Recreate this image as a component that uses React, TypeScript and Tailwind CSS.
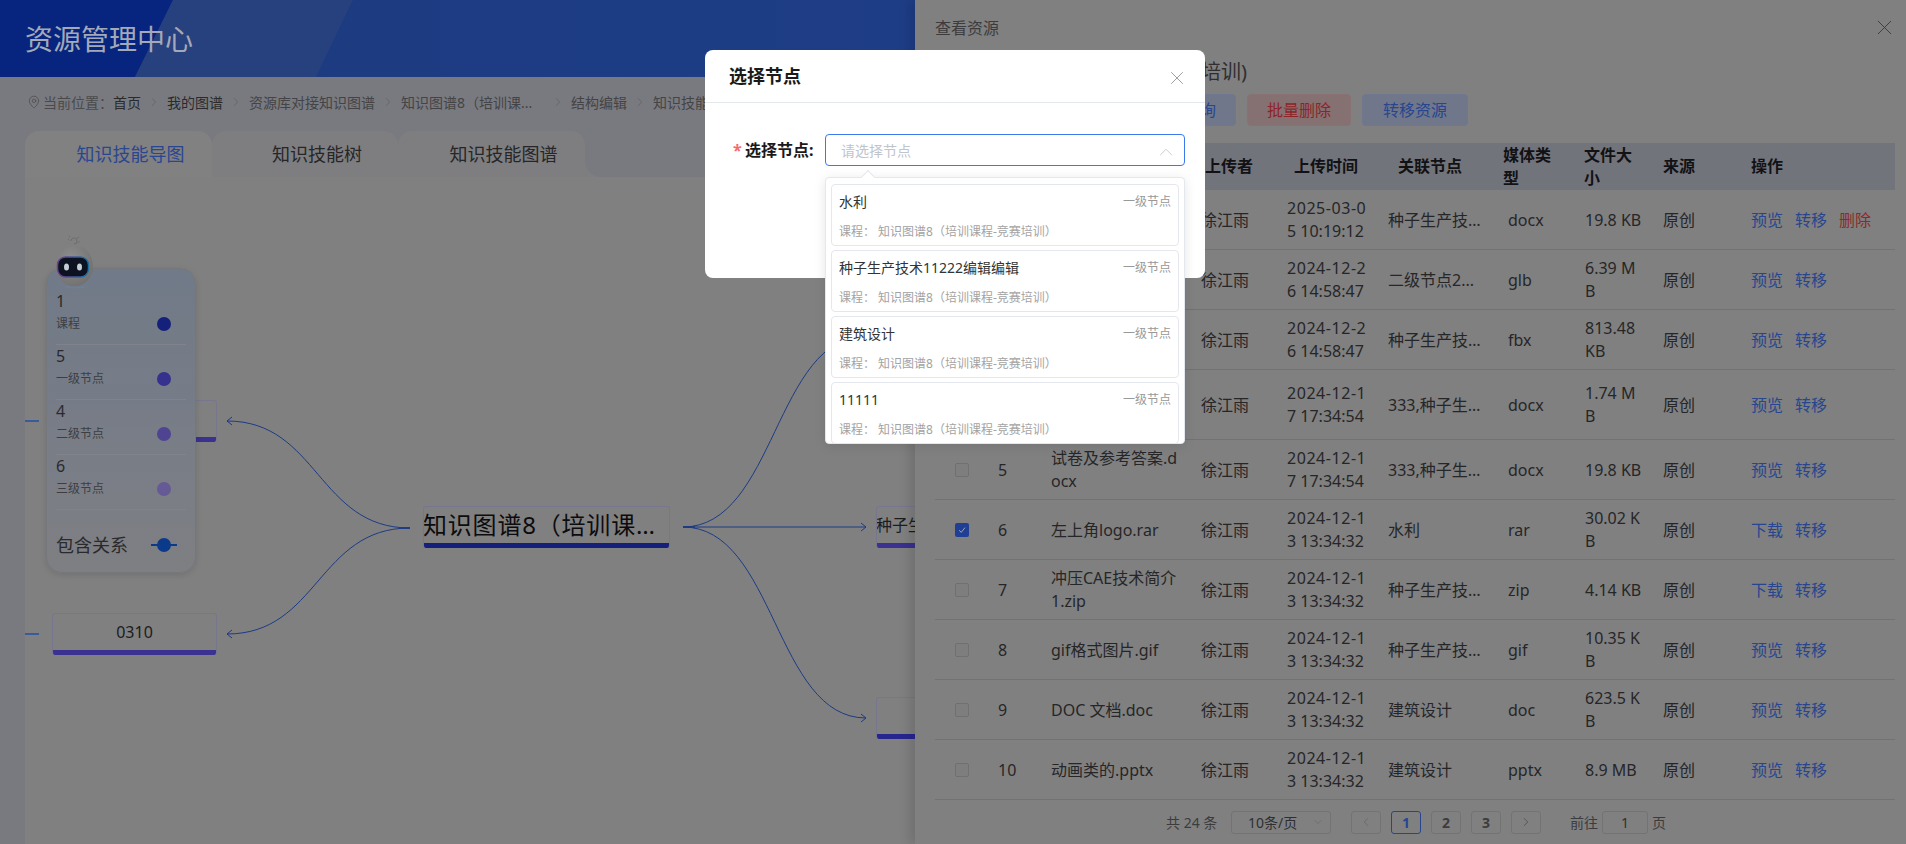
import { ChevronDown, ChevronLeft, ChevronRight, ChevronUp, MapPin, X } from 'lucide-react';

const crumbs = ['首页', '我的图谱', '资源库对接知识图谱', '知识图谱8（培训课...', '结构编辑', '知识技能导图'];

const legend = [
  { count: '1', label: '课程', dot: 'bg-[#15207a]' },
  { count: '5', label: '一级节点', dot: 'bg-[#36308e]' },
  { count: '4', label: '二级节点', dot: 'bg-[#4f4492]' },
  { count: '6', label: '三级节点', dot: 'bg-[#655a96]' }
];

const options = [
  { name: '水利' },
  { name: '种子生产技术11222编辑编辑' },
  { name: '建筑设计' },
  { name: '11111' }
];

const rows = [
  { no: 1, name: '', date: ['2025-03-0', '5 10:19:12'], node: '种子生产技术', type: 'docx', size: '19.8 KB', first: '预览', del: true, h: 'h-[59px]' },
  { no: 2, name: '', date: ['2024-12-2', '6 14:58:47'], node: '二级节点2...', type: 'glb', size: '6.39 M\nB', first: '预览', h: 'h-[60px]' },
  { no: 3, name: '', date: ['2024-12-2', '6 14:58:47'], node: '种子生产技术', type: 'fbx', size: '813.48\nKB', first: '预览', h: 'h-[60px]' },
  { no: 4, name: '', date: ['2024-12-1', '7 17:34:54'], node: '333,种子生产', type: 'docx', size: '1.74 M\nB', first: '预览', h: 'h-[70px]' },
  { no: 5, name: '试卷及参考答案.d\nocx', date: ['2024-12-1', '7 17:34:54'], node: '333,种子生产', type: 'docx', size: '19.8 KB', first: '预览', h: 'h-[60px]' },
  { no: 6, name: '左上角logo.rar', date: ['2024-12-1', '3 13:34:32'], node: '水利', type: 'rar', size: '30.02 K\nB', first: '下载', checked: true, h: 'h-[60px]' },
  { no: 7, name: '冲压CAE技术简介\n1.zip', date: ['2024-12-1', '3 13:34:32'], node: '种子生产技术', type: 'zip', size: '4.14 KB', first: '下载', h: 'h-[60px]' },
  { no: 8, name: 'gif格式图片.gif', date: ['2024-12-1', '3 13:34:32'], node: '种子生产技术', type: 'gif', size: '10.35 K\nB', first: '预览', h: 'h-[60px]' },
  { no: 9, name: 'DOC 文档.doc', date: ['2024-12-1', '3 13:34:32'], node: '建筑设计', type: 'doc', size: '623.5 K\nB', first: '预览', h: 'h-[60px]' },
  { no: 10, name: '动画类的.pptx', date: ['2024-12-1', '3 13:34:32'], node: '建筑设计', type: 'pptx', size: '8.9 MB', first: '预览', h: 'h-[60px]' }
];

const MapNode = ({ className, bar, children }: { className: string; bar: string; children?: React.ReactNode }) => (
  <div className={`absolute h-[42px] rounded-[3px] border border-[#77768f] border-b-0 bg-[#808080] overflow-hidden flex flex-col ${className}`}>
    <div className="flex-1 min-h-0 flex items-center">{children}</div>
    <div className={`h-[5px] shrink-0 ${bar}`} />
  </div>
);

const Robot = () => (
  <svg className="absolute left-[28px] top-[58px] z-20" width="44" height="54" viewBox="0 0 44 54">
    <defs>
      <radialGradient id="head" cx="0.4" cy="0.35" r="0.75">
        <stop offset="0" stopColor="#8f8f8f" />
        <stop offset="1" stopColor="#6e6e6e" />
      </radialGradient>
      <linearGradient id="rim" x1="0" x2="1">
        <stop offset="0" stopColor="#6f3f90" />
        <stop offset="1" stopColor="#1f6f9f" />
      </linearGradient>
    </defs>
    <path d="M18 6a3 3 0 1 1 3 3M24 3l2-1M25 7h2M15 4l1 1M16 1l1 1" fill="none" stroke="#707070" strokeWidth="1.2" />
    <ellipse cx="22" cy="52" rx="11" ry="1.5" fill="#6f7f95" />
    <ellipse cx="21.5" cy="31" rx="18.5" ry="20.5" fill="url(#head)" />
    <rect x="4.5" y="22" width="31" height="20" rx="8" fill="#0d1220" stroke="url(#rim)" strokeWidth="1.5" />
    <ellipse cx="13.5" cy="32" rx="2.5" ry="3.5" fill="#c4ccd6" />
    <ellipse cx="26.5" cy="32" rx="2.5" ry="3.5" fill="#c4ccd6" />
  </svg>
);

const Arrow = ({ x, y, dir }: { x: number; y: number; dir: 1 | -1 }) => (
  <path d={`M${x + dir * -5} ${y - 4}L${x} ${y}L${x + dir * -5} ${y + 4}`} fill="none" stroke="#1c3a85" strokeWidth="1" />
);

const LeftPage = () => (
  <div className="w-[915px] shrink-0 h-full flex flex-col bg-[#797a7f]">
    <header className="relative h-[77px] shrink-0 bg-[linear-gradient(90deg,#1c3a7e,#1d3d86)] overflow-hidden flex items-center pl-[25px]">
      <svg className="absolute left-0 top-0" width="360" height="77" viewBox="0 0 360 77">
        <polygon points="0,0 173,0 135,77 0,77" fill="#07257f" />
        <polygon points="173,0 353,0 316,77 135,77" fill="#27407e" />
      </svg>
      <h1 className="relative text-[28px] leading-none font-normal text-[#a3a9b8]">资源管理中心</h1>
    </header>
    <div className="h-[54px] shrink-0 pl-[27px] pb-[4px] flex items-center text-[14px] text-[#3a3a3c] whitespace-nowrap">
      <MapPin size={14} strokeWidth={1.25} className="mr-[2px] text-[#4a4a4c]" />
      <span className="text-[#4a4a4c]">当前位置：</span>
      {crumbs.map((item, i) => (
        <span key={item} className="flex items-center">
          <span className={`${i < 2 ? 'text-[#2a2a2c]' : 'text-[#444446]'} ${i === 3 ? 'w-[144px]' : ''}`}>{item}</span>
          {i < crumbs.length - 1 && <ChevronRight size={14} strokeWidth={1.25} className="mx-[6px] text-[#5f5f63]" />}
        </span>
      ))}
    </div>
    <div className="flex-1 min-h-0 ml-[25px] flex flex-col">
      <div className="h-[46px] shrink-0 flex text-[18px]">
        <div className="relative z-[3] w-[187px] rounded-t-[14px] bg-[#818181] pl-[24px] flex items-center justify-center text-[#2a4690]">知识技能导图</div>
        <div className="relative z-[2] w-[186px] rounded-t-[14px] bg-[#7e7e80] pl-[24px] flex items-center justify-center text-[#262628]">知识技能树</div>
        <div className="relative z-[1] w-[187px] rounded-t-[14px] bg-[#7e7e80] pl-[24px] flex items-center justify-center text-[#262628]">
          知识技能图谱
          <span className="absolute left-full bottom-0 w-[16px] h-[16px] bg-[#7e7e80]">
            <span className="block w-full h-full rounded-bl-[16px] bg-[#797a7f]" />
          </span>
        </div>
      </div>
      <div className="relative flex-1 min-h-0 bg-[#808080] overflow-hidden">
        <svg className="absolute left-0 top-0" width="890" height="667" viewBox="25 177 890 667">
          <g fill="none" stroke="#1c3a85" strokeWidth="1">
            <path d="M410 528C318 528 318 421 227 421" />
            <path d="M410 528C318 528 318 634 227 634" />
            <path d="M683 527C775 527 775 336 866 336" />
            <path d="M683 527L866 527" />
            <path d="M683 527C775 527 775 718 866 718" />
            <path d="M400 528H410M683 527H695" strokeWidth="1.5" />
          </g>
          <path d="M25 421H39M25 634H39" stroke="#3a5aa0" strokeWidth="2" />
          <Arrow x={227} y={421} dir={-1} />
          <Arrow x={227} y={634} dir={-1} />
          <Arrow x={866} y={527} dir={1} />
          <Arrow x={866} y={718} dir={1} />
        </svg>
        <MapNode className="left-[398px] top-[329px] w-[247px]" bar="bg-[#15207a]">
          <span className="w-full -ml-[1px] truncate text-[24px] leading-none tracking-[0.8px] text-[#0c0c0e] pr-[10px]">知识图谱8（培训课程-竞赛培训）</span>
        </MapNode>
        <MapNode className="left-[27px] top-[223px] w-[165px]" bar="bg-[#3a3190]" />
        <MapNode className="left-[27px] top-[436px] w-[165px]" bar="bg-[#3a3190]">
          <span className="w-full text-center text-[16px] text-[#1c1c1e]">0310</span>
        </MapNode>
        <MapNode className="left-[851px] top-[329px] w-[165px]" bar="bg-[#3a3190]">
          <span className="-ml-[1px] whitespace-nowrap text-[16px] text-[#1c1c1e]">种子生产技术</span>
        </MapNode>
        <MapNode className="left-[851px] top-[520px] w-[165px]" bar="bg-[#27268f]" />
        <Robot />
        <div className="absolute left-[21px] top-[91px] w-[150px] h-[305px] rounded-[16px] border border-[#76777b] bg-[linear-gradient(180deg,#717a88,#787d87_55%,#7e7f82)] shadow-[0_2px_6px_rgba(0,0,0,0.12)] px-[9px] pt-[21px]">
          {legend.map((item) => (
            <div key={item.label} className="h-[55px] border-b border-[#7f848c] relative">
              <div className="text-[16px] leading-[22px] text-[#2a2a2c]">{item.count}</div>
              <div className="mt-[2px] text-[12px] leading-[20px] text-[#3e3e42]">{item.label}</div>
              <span className={`absolute left-[101px] top-[27px] w-[14px] h-[14px] rounded-full ${item.dot}`} />
            </div>
          ))}
          <div className="relative mt-[22px] h-[26px] flex items-center text-[18px] text-[#2a2a2c]">
            包含关系
            <span className="absolute left-[95px] top-[12px] w-[26px] h-[2px] bg-[#0b3a8a]" />
            <span className="absolute left-[101px] top-[6px] w-[14px] h-[14px] rounded-full bg-[#0b3a8a]" />
          </div>
          <div className="mt-[21px] border-b border-[#7e8084]" />
        </div>
      </div>
    </div>
  </div>
);

const Drawer = () => (
  <aside className="flex-1 h-full bg-[#808080] shadow-[-6px_0_10px_rgba(0,0,0,0.12)] z-10 pl-[20px] pr-[11px] flex flex-col text-[#262628]">
    <div className="h-[57px] shrink-0 flex items-center justify-between pb-[2px] text-[#3c3c3e]">
      <span className="text-[16px]">查看资源</span>
      <X size={25} strokeWidth={0.9} className="-mr-[2px] text-[#3a3a3c]" />
    </div>
    <div className="w-[312px] shrink-0 mb-[7px] flex justify-end whitespace-nowrap text-[20px] leading-[30px] text-[#2f2f31]">知识图谱8（培训课程-竞赛培训)</div>
    <div className="shrink-0 h-[32px] mb-[17px] ml-[197px] flex gap-[11px] text-[16px]">
      <button className="w-[104px] rounded-[4px] border border-[#6f788f] bg-[#70778a] text-[#27468f]">资源查询</button>
      <button className="w-[104px] rounded-[4px] border border-[#887274] bg-[#857172] text-[#8e2428]">批量删除</button>
      <button className="w-[106px] rounded-[4px] border border-[#6f788f] bg-[#70778a] text-[#27468f]">转移资源</button>
    </div>
    <table className="w-[960px] table-fixed border-collapse text-[16px] leading-[23px] [&_td]:pt-[2px]">
      <colgroup>
        <col className="w-[50px]" />
        <col className="w-[55px]" />
        <col className="w-[150px]" />
        <col className="w-[86px]" />
        <col className="w-[101px]" />
        <col className="w-[115px]" />
        <col className="w-[81px]" />
        <col className="w-[79px]" />
        <col className="w-[88px]" />
        <col className="w-[155px]" />
      </colgroup>
      <thead>
        <tr className="h-[47px] bg-[#72747c] text-left text-[#121214] font-bold">
          <th />
          <th />
          <th />
          <th className="pl-[15px]">上传者</th>
          <th className="pl-[18px]">上传时间</th>
          <th className="pl-[21px]">关联节点</th>
          <th className="pl-[11px]">媒体类<br />型</th>
          <th className="pl-[11px]">文件大<br />小</th>
          <th className="pl-[11px]">来源</th>
          <th className="pl-[11px]">操作</th>
        </tr>
      </thead>
      <tbody>
        {rows.map((row) => (
          <tr key={row.no} className={`${row.h} border-b border-[#727272]`}>
            <td className="pl-[20px]">
              {row.checked ? (
                <span className="w-[14px] h-[14px] rounded-[2px] bg-[#1f3f94] flex items-center justify-center">
                  <svg width="10" height="10" viewBox="0 0 10 10"><path d="M2.2 5.2 4.2 7.4 8 2.6" fill="none" stroke="#9aa3b8" strokeWidth="1" /></svg>
                </span>
              ) : (
                <span className="block w-[14px] h-[14px] rounded-[2px] border border-[#707070] bg-[#7e7e7e]" />
              )}
            </td>
            <td className="pl-[13px]">{row.no}</td>
            <td className="pl-[11px] whitespace-pre-line">{row.name}</td>
            <td className="pl-[11px]">徐江雨</td>
            <td className="pl-[11px] whitespace-nowrap">
              <span className="block tracking-[0.55px]">{row.date[0]}</span>
              <span className="block">{row.date[1]}</span>
            </td>
            <td className="pl-[11px]"><div className="w-[94px] truncate">{row.node}</div></td>
            <td className="pl-[16px]">{row.type}</td>
            <td className="pl-[12px] whitespace-pre-line">{row.size}</td>
            <td className="pl-[11px]">原创</td>
            <td className="pl-[11px]">
              <div className="flex gap-[12px]">
                <span className="text-[#27468f]">{row.first}</span>
                <span className="text-[#27468f]">转移</span>
                {row.del && <span className="text-[#8c2a2a]">删除</span>}
              </div>
            </td>
          </tr>
        ))}
      </tbody>
    </table>
    <div className="mt-[11px] pl-[231px] h-[23px] flex items-center text-[14px] text-[#3c3c3e] whitespace-nowrap">
      <span className="w-[65px]">共 24 条</span>
      <span className="w-[100px] h-[23px] rounded-[3px] border border-[#737373] flex items-center justify-between pl-[16px] pr-[6px] text-[#2f2f31]">
        10条/页
        <ChevronDown size={12} strokeWidth={1} className="text-[#5f5f61]" />
      </span>
      <span className="ml-[20px] w-[30px] h-[23px] rounded-[3px] border border-[#737373] flex items-center justify-center text-[#5a5a5c]"><ChevronLeft size={14} strokeWidth={1} /></span>
      <span className="ml-[10px] w-[30px] h-[23px] rounded-[3px] border border-[#27468f] flex items-center justify-center text-[#27468f] font-bold">1</span>
      <span className="ml-[10px] w-[30px] h-[23px] rounded-[3px] border border-[#737373] flex items-center justify-center font-bold">2</span>
      <span className="ml-[10px] w-[30px] h-[23px] rounded-[3px] border border-[#737373] flex items-center justify-center font-bold">3</span>
      <span className="ml-[10px] w-[30px] h-[23px] rounded-[3px] border border-[#737373] flex items-center justify-center text-[#3a3a3c]"><ChevronRight size={14} strokeWidth={1} /></span>
      <span className="ml-[29px]">前往</span>
      <span className="ml-[4px] w-[46px] h-[23px] rounded-[3px] border border-[#737373] flex items-center justify-center text-[#2f2f31]">1</span>
      <span className="ml-[4px]">页</span>
    </div>
  </aside>
);

const SelectModal = () => (
  <div className="absolute left-[705px] top-[50px] z-20 w-[500px] h-[228px] rounded-[8px] bg-white">
    <div className="h-[53px] border-b border-[#e4e7ed] pl-[24px] pr-[17px] flex items-center justify-between">
      <span className="text-[18px] font-bold text-[#1a1a1a]">选择节点</span>
      <X size={22} strokeWidth={0.9} className="text-[#8a8a8a] mt-[3px]" />
    </div>
    <div className="pl-[28px] pt-[31px] flex items-center text-[16px] font-bold text-[#1a1a1a]">
      <span className="w-[12px] text-[#f56c6c]">*</span>
      <span className="w-[80px]">选择节点:</span>
      <div className="w-[360px] h-[32px] rounded-[4px] border border-[#3c78f0] pl-[15px] pr-[7px] flex items-center justify-between text-[14px] font-normal text-[#c0c4cc]">
        请选择节点
        <ChevronUp size={22} strokeWidth={0.9} className="mt-[3px]" />
      </div>
    </div>
    <div className="absolute left-[120px] top-[127px] w-[360px] h-[267px] rounded-[4px] border border-[#e4e7ed] bg-white shadow-[0_2px_12px_rgba(0,0,0,0.1)] px-[5px] pt-[6px]">
      <span className="absolute left-[37px] -top-[6px] w-[10px] h-[10px] rotate-45 bg-white border-l border-t border-[#e4e7ed]" />
      <div className="h-full overflow-hidden flex flex-col gap-[4px]">
        {options.map((opt) => (
          <div key={opt.name} className="h-[62px] shrink-0 rounded-[4px] border border-[#e4e7ed] px-[7px] pt-[6px]">
            <div className="flex items-center justify-between h-[20px]">
              <span className="text-[14px] text-[#333333]">{opt.name}</span>
              <span className="text-[12px] text-[#999999] mt-[1px]">一级节点</span>
            </div>
            <div className="mt-[11px] h-[20px] flex items-center text-[12px] text-[#a3a3a3]">课程：&nbsp;知识图谱8（培训课程-竞赛培训）</div>
          </div>
        ))}
      </div>
    </div>
  </div>
);

export default function App() {
  return (
    <div className="relative w-[1906px] h-[844px] overflow-hidden flex bg-[#808080] font-['Noto_Sans','Noto_Sans_CJK_SC',sans-serif]">
      <LeftPage />
      <Drawer />
      <SelectModal />
    </div>
  );
}
